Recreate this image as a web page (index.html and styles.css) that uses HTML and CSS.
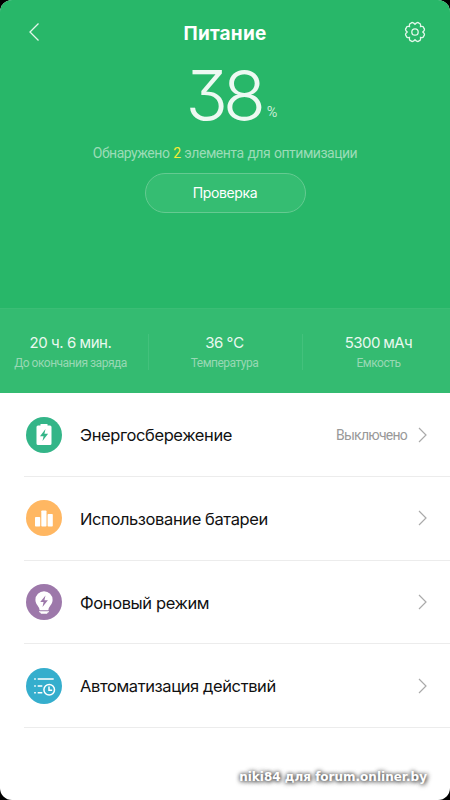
FILE: index.html
```html
<!DOCTYPE html>
<html lang="ru">
<head>
<meta charset="utf-8">
<title>Питание</title>
<link rel="stylesheet" href="styles.css">
</head>
<body>
<main class="screen">
  <section class="hero">
    <header class="bar">
      <svg class="back" width="12" height="20" viewBox="0 0 12 20"><path d="M10.500 1.500 2 10l8.500 8.500"/></svg>
      <h1 class="title">Питание</h1>
      <svg class="gear" width="22" height="22" viewBox="-11 -11 22 22"><path d="M7.800 0Q10.600 2.600 8.800 3.900Q8.600 6 5.500 5.500Q6 8.600 3.900 8.800Q2.600 10.600 0 7.800Q-2.600 10.600-3.900 8.800Q-6 8.600-5.500 5.500Q-8.600 6-8.800 3.900Q-10.600 2.600-7.800 0Q-10.600-2.600-8.800-3.900Q-8.600-6-5.500-5.500Q-6-8.600-3.900-8.800Q-2.600-10.600 0-7.800Q2.600-10.600 3.900-8.800Q6-8.600 5.500-5.500Q8.600-6 8.800-3.900Q10.600-2.600 7.800 0Z"/><circle r="3.200"/></svg>
    </header>
    <div class="level"><span class="number">38</span><span class="percent">%</span></div>
    <p class="found">Обнаружено <b>2</b> элемента для оптимизации</p>
    <button class="check">Проверка</button>
  </section>
  <section class="stats">
    <div class="stat"><strong>20 ч. 6 мин.</strong><span>До окончания заряда</span></div>
    <div class="stat"><strong>36 ℃</strong><span>Температура</span></div>
    <div class="stat"><strong>5300 мАч</strong><span>Емкость</span></div>
  </section>
  <ul class="menu">
    <li class="row">
      <svg class="icon" viewBox="0 0 36 36"><circle cx="18" cy="18" r="18" fill="#33b588"/><path fill="#fff" d="M14.500 7h7v1.500H24a1.500 1.500 0 0 1 1.500 1.500v16.500A1.500 1.500 0 0 1 24 28H12a1.500 1.500 0 0 1-1.500-1.500V10A1.500 1.500 0 0 1 12 8.500h2.500z"/><path fill="#33b588" d="m19.500 12-5.500 7.300h3.600L16.500 24l5.600-7.300h-3.700z"/></svg>
      <span class="name">Энергосбережение</span><span class="value">Выключено</span>
      <svg class="arrow" viewBox="0 0 9 16"><path d="m1 1 7 7-7 7"/></svg>
    </li>
    <li class="row">
      <svg class="icon" viewBox="0 0 36 36"><circle cx="18" cy="18" r="18" fill="#ffb762"/><g fill="#fff"><rect x="9" y="17" width="5.200" height="9.500" rx=".8"/><rect x="15.300" y="10.500" width="5.200" height="16" rx=".8"/><rect x="21.600" y="14" width="5.200" height="12.500" rx=".8"/></g></svg>
      <span class="name">Использование батареи</span>
      <svg class="arrow" viewBox="0 0 9 16"><path d="m1 1 7 7-7 7"/></svg>
    </li>
    <li class="row">
      <svg class="icon" viewBox="0 0 36 36"><circle cx="18" cy="18" r="18" fill="#9d78aa"/><path fill="#fff" d="M18 7.300a8.600 8.600 0 0 1 8.600 8.600c0 4.600-4 6.100-4.200 10.300h-8.800c-.2-4.200-4.200-5.700-4.200-10.300A8.600 8.600 0 0 1 18 7.300zM13 27.300h10v1h-1l-1 1.500h-6l-1-1.500h-1z"/><path fill="#9d78aa" d="m19.500 11.500-5.300 6.500h3.400L16.500 23l5.400-6.700h-3.500z"/></svg>
      <span class="name">Фоновый режим</span>
      <svg class="arrow" viewBox="0 0 9 16"><path d="m1 1 7 7-7 7"/></svg>
    </li>
    <li class="row">
      <svg class="icon" viewBox="0 0 36 36"><circle cx="18" cy="18" r="18" fill="#35aecd"/><g fill="none" stroke="#fff" stroke-width="1.500"><path d="M8.200 11h1.600M11.700 11h16M8.200 18h1.600M11.700 18h4.600M8.200 24.700h1.600M11.700 24.700h4.600"/><circle cx="23.200" cy="21.700" r="5.300"/><path d="M23 18.500v3.700h3.200"/></g></svg>
      <span class="name">Автоматизация действий</span>
      <svg class="arrow" viewBox="0 0 9 16"><path d="m1 1 7 7-7 7"/></svg>
    </li>
  </ul>
  <footer class="mark">niki84 для forum.onliner.by</footer>
</main>
</body>
</html>
```
FILE: styles.css
```css
* { box-sizing: border-box; margin: 0; padding: 0; }
body { background: #000; font-family: Inter, "Noto Sans", sans-serif; }
.screen { display: flex; flex-direction: column; width: 450px; height: 800px; overflow: hidden; border-radius: 12px; background: #fff; }
.hero { display: flex; flex-direction: column; align-items: center; height: 308px; background: #28b769; color: #fff; }
.bar { display: flex; align-items: center; justify-content: space-between; width: 100%; height: 64px; padding: 0 24px 0 28px; }
.back, .gear { fill: none; stroke: #e3f7eb; stroke-width: 1.3; }
.title { font-size: 19px; line-height: 24px; font-weight: 700; letter-spacing: .2px; margin: 3px 0 0 6px; }
.level { display: flex; align-items: baseline; height: 76px; margin-left: 13px; color: #edf9f2; }
.number { font-size: 70px; line-height: 64px; font-weight: 280; letter-spacing: -5px; font-feature-settings: "cv09"; }
.percent { font: 400 14.500px/20px Roboto, sans-serif; margin-left: 6px; transform: translateY(-4px); color: #c4ebd4; }
.found { margin-top: 3px; font: 400 14px/20px Roboto, sans-serif; letter-spacing: -.48px; word-spacing: .8px; color: #9bdcb7; white-space: nowrap; }
.found b { font-weight: 400; color: #f5ed36; }
.check { width: 161px; height: 40px; margin-top: 10px; border: 1px solid #65ca91; border-radius: 20px; background: #35bd72; color: #fff; font: 400 14px/20px Inter, sans-serif; letter-spacing: -.4px; }
.stats { display: flex; align-items: center; height: 85px; padding-top: 1px; background: #34bb71; border-top: 1px solid #3bbd75; }
.stat { display: flex; flex-direction: column; align-items: center; justify-content: center; width: 154px; height: 36px; color: #e9f8ef; white-space: nowrap; }
.stat:first-child { width: 148px; padding-right: 7px; }
.stat:nth-child(2) { padding-right: 2px; }
.stat:last-child { width: 148px; padding-left: 4px; }
.stat + .stat { border-left: 1px solid #43c17c; }
.stat strong { font-size: 15px; line-height: 22px; font-weight: 400; letter-spacing: -.45px; }
.stat:last-child strong { letter-spacing: -.6px; }
.stat span { font: 400 12px/18px Roboto, sans-serif; letter-spacing: -.5px; color: #98d8b4; }
.menu { list-style: none; padding: .4px 0 0 24px; }
.row { display: flex; align-items: center; height: 83.700px; padding: 0 23px 0 2px; border-bottom: 1px solid #ececec; }
.icon { width: 36px; height: 36px; margin-right: 18px; }
.name { flex: 1; padding-top: 1px; font-size: 16.500px; line-height: 24px; letter-spacing: -.39px; color: #111; }
.value { padding-top: 1px; font: 400 14px/20px Roboto, sans-serif; letter-spacing: -.75px; color: #999; margin-right: 11px; }
.arrow { width: 9px; height: 16px; fill: none; stroke: #aaa; stroke-width: 1.200; }
.mark { margin: 40px 23px 0 auto; font: bold 12px/18px "DejaVu Sans", sans-serif; color: #fff; text-shadow: 0 0 4px #444, 1px 1px 5px #444; }
```
